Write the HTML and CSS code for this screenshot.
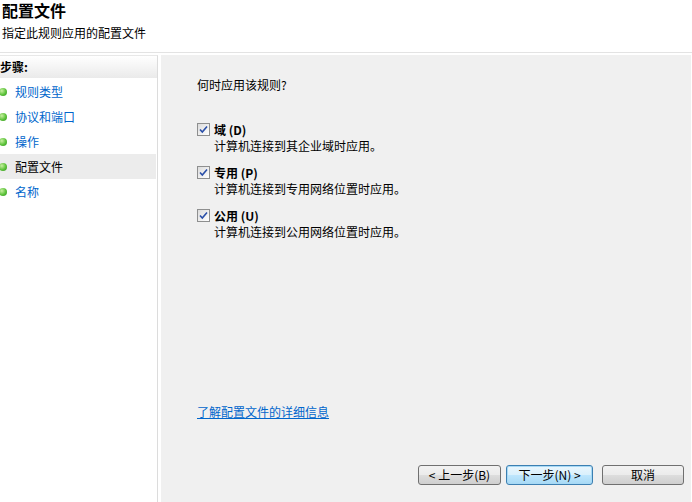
FILE: index.html
```html
<!DOCTYPE html>
<html lang="zh-CN">
<head>
<meta charset="utf-8">
<link rel="stylesheet" href="styles.css">
</head>
<body>
<div class="window">
  <header class="header">
    <div class="title">配置文件</div>
    <div class="subtitle">指定此规则应用的配置文件</div>
  </header>
  <div class="main">
    <aside class="steps">
      <div class="steps-head">步骤:</div>
      <ul class="step-list">
        <li class="step"><span class="dot"></span><span class="link">规则类型</span></li>
        <li class="step"><span class="dot"></span><span class="link">协议和端口</span></li>
        <li class="step"><span class="dot"></span><span class="link">操作</span></li>
        <li class="step current"><span class="dot"></span><span>配置文件</span></li>
        <li class="step"><span class="dot"></span><span class="link">名称</span></li>
      </ul>
    </aside>
    <section class="content">
      <div class="question">何时应用该规则?</div>
      <div class="options">
        <div class="option">
          <div class="opt-row"><span class="check"><svg viewBox="0 0 13 13" width="13" height="13"><path d="M3 6.5 L5.3 9 L10 3.5" fill="none" stroke="#2a4fa8" stroke-width="1.6"/></svg></span><span class="opt-label">域 (D)</span></div>
          <div class="opt-desc">计算机连接到其企业域时应用。</div>
        </div>
        <div class="option">
          <div class="opt-row"><span class="check"><svg viewBox="0 0 13 13" width="13" height="13"><path d="M3 6.5 L5.3 9 L10 3.5" fill="none" stroke="#2a4fa8" stroke-width="1.6"/></svg></span><span class="opt-label">专用 (P)</span></div>
          <div class="opt-desc">计算机连接到专用网络位置时应用。</div>
        </div>
        <div class="option">
          <div class="opt-row"><span class="check"><svg viewBox="0 0 13 13" width="13" height="13"><path d="M3 6.5 L5.3 9 L10 3.5" fill="none" stroke="#2a4fa8" stroke-width="1.6"/></svg></span><span class="opt-label">公用 (U)</span></div>
          <div class="opt-desc">计算机连接到公用网络位置时应用。</div>
        </div>
      </div>
      <a class="more" href="#">了解配置文件的详细信息</a>
      <div class="buttons">
        <button class="btn">&lt; 上一步(B)</button>
        <button class="btn primary">下一步(N) &gt;</button>
        <button class="btn cancel">取消</button>
      </div>
    </section>
  </div>
</div>
</body>
</html>
```
FILE: styles.css
```css
* { box-sizing: border-box; }
html, body { margin: 0; padding: 0; }
body {
  width: 692px;
  height: 502px;
  background: #ffffff;
  font-family: "Noto Sans CJK SC", "Liberation Sans", sans-serif;
  font-size: 12px;
  color: #000;
  overflow: hidden;
}
.window {
  display: flex;
  flex-direction: column;
  height: 502px;
}
.header {
  height: 53px;
  padding: 0 0 0 2px;
  border-bottom: 1px solid #e3e3e3;
}
.title {
  font-size: 16px;
  font-weight: bold;
  line-height: 21px;
}
.subtitle {
  font-size: 12px;
  line-height: 16px;
  margin-top: 4px;
}
.main {
  flex: 1;
  display: flex;
  padding-top: 2px;
  min-height: 0;
}
.steps {
  width: 158px;
  border-right: 1px solid #dcdcdc;
  border-top: 1px solid #e8e8e8;
  background: #fff;
}
.steps-head {
  height: 22px;
  line-height: 21px;
  font-weight: bold;
  background: linear-gradient(#ffffff, #eaeaea);
}
.step-list {
  list-style: none;
  margin: 1px 0 0 0;
  padding: 0;
}
.step {
  height: 25px;
  display: flex;
  align-items: center;
  gap: 8px;
  margin-right: 1px;
}
.step.current { background: #ececec; }
.dot {
  width: 8px;
  height: 8px;
  border-radius: 50%;
  margin-left: -1px;
  background: radial-gradient(circle at 35% 35%, #c8f0a0 0, #5cc23a 55%, #2f8f1e 100%);
}
.link { color: #0066cc; }
.content {
  flex: 1;
  margin-left: 3px;
  background: #f0f0f0;
  border-right: 1px solid #fff;
  display: flex;
  flex-direction: column;
  padding: 22px 0 0 36px;
}
.question { line-height: 16px; }
.options {
  margin-top: 28px;
  display: flex;
  flex-direction: column;
  gap: 10px;
}
.option { display: flex; flex-direction: column; }
.opt-row {
  display: flex;
  align-items: center;
  height: 16px;
}
.check {
  width: 13px;
  height: 13px;
  border: 1px solid #8e8f8f;
  background: linear-gradient(135deg, #dcdcdc, #ffffff);
  display: flex;
  align-items: center;
  justify-content: center;
  margin-right: 4px;
}
.check svg { display: block; flex: none; }
.opt-label { font-weight: bold; }
.opt-desc {
  margin-left: 17px;
  line-height: 16px;
  margin-top: 1px;
}
.more {
  margin-top: 164px;
  color: #0066cc;
  text-decoration: underline;
  line-height: 16px;
  align-self: flex-start;
}
.buttons {
  margin-top: auto;
  margin-bottom: 17px;
  display: flex;
  gap: 5px;
  padding-left: 221px;
}
.btn {
  width: 83px;
  height: 20px;
  font-family: inherit;
  font-size: 12px;
  line-height: 16px;
  padding: 0;
  border: 1px solid #707070;
  border-radius: 3px;
  background: linear-gradient(#f2f2f2 0, #ebebeb 50%, #dddddd 51%, #cfcfcf 100%);
  color: #000;
}
.btn.primary {
  width: 87px;
  border-color: #3c7fb1;
  background: linear-gradient(#eaf6fd 0, #d9f0fc 50%, #bee6fd 51%, #a7d9f5 100%);
  box-shadow: inset 0 0 0 1px #a7d9f5;
}
.btn.cancel { margin-left: 4px; width: 82px; }
```
